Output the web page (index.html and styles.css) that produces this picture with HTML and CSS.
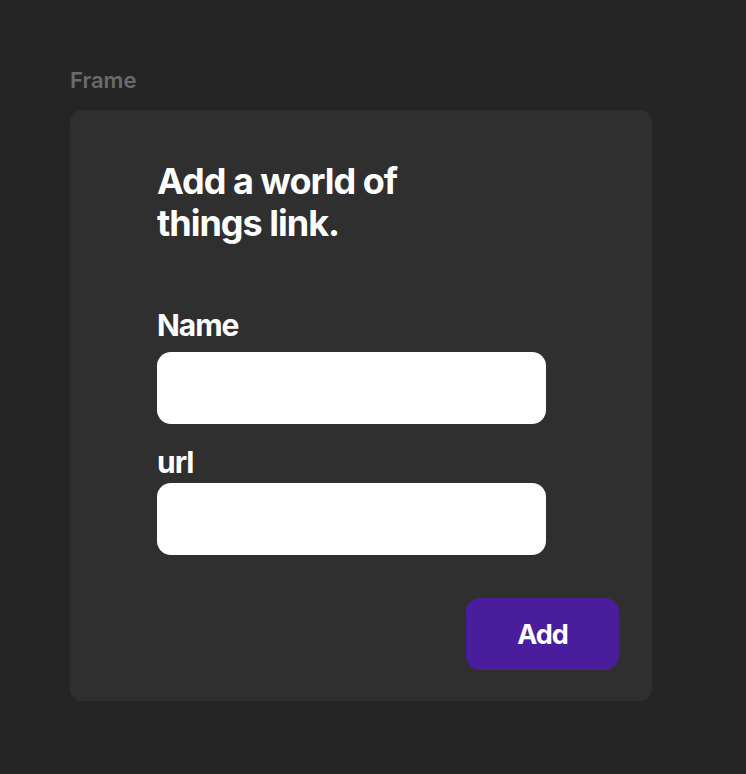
FILE: index.html
```html
<!DOCTYPE html>
<html>
<head>
<meta charset="utf-8">
<link rel="stylesheet" href="styles.css">
</head>
<body>
<div class="canvas">
  <div class="frame-label">Frame</div>
  <div class="frame">
    <div class="content">
      <h1 class="title">Add a world of things link.</h1>
      <div class="field field-name">
        <label class="label">Name</label>
        <div class="input"></div>
      </div>
      <div class="field field-url">
        <label class="label">url</label>
        <div class="input"></div>
      </div>
    </div>
    <div class="actions">
      <button class="btn">Add</button>
    </div>
  </div>
</div>
</body>
</html>
```
FILE: styles.css
```css
html, body {
  margin: 0;
  padding: 0;
  background: #252525;
  font-family: Inter, "Noto Sans", sans-serif;
}
.canvas {
  padding: 68px 0 0 70px;
  width: 582px;
}
.frame-label {
  color: #6a6a6a;
  font-size: 22px;
  font-weight: 600;
  line-height: 24px;
  height: 24px;
  margin-bottom: 18px;
}
.frame {
  background: #2f2f2f;
  border-radius: 12px;
  height: 591px;
  box-sizing: border-box;
  padding: 50px 33px 0 87px;
  display: flex;
  flex-direction: column;
}
.content {
  width: 389px;
}
.title {
  margin: 0;
  color: #ffffff;
  font-size: 36px;
  font-weight: 700;
  letter-spacing: -0.028em;
  line-height: 42px;
  width: 270px;
}
.field {
  display: flex;
  flex-direction: column;
}
.field-name { margin-top: 64px; }
.field-url { margin-top: 21px; }
.label {
  color: #ffffff;
  font-size: 30px;
  font-weight: 700;
  letter-spacing: -0.035em;
  line-height: 34px;
  margin-bottom: 10px;
}
.field-url .label { margin-bottom: 4px; }
.input {
  height: 72px;
  background: #ffffff;
  border-radius: 14px;
}
.actions {
  display: flex;
  justify-content: flex-end;
  margin-top: 43px;
}
.btn {
  width: 153px;
  height: 72px;
  background: #4a1d9c;
  color: #ffffff;
  border: none;
  border-radius: 14px;
  font-family: Inter, "Noto Sans", sans-serif;
  font-size: 27px;
  font-weight: 700;
  letter-spacing: -0.035em;
}
```
